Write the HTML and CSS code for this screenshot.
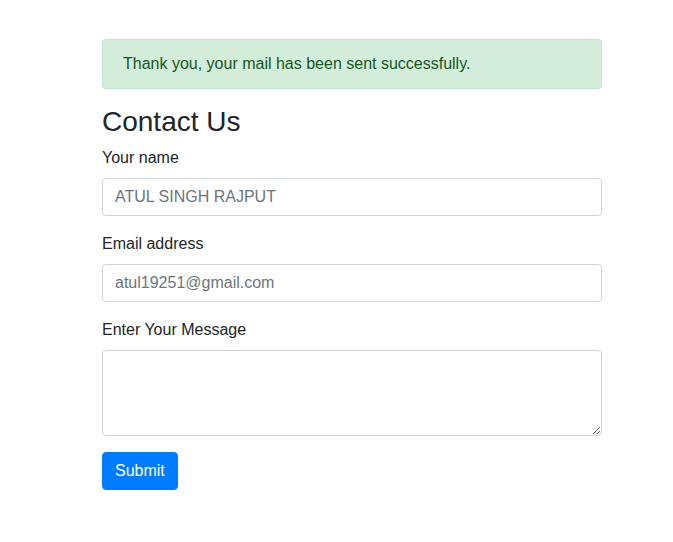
FILE: index.html
```html
<!DOCTYPE html>
<html lang="en">
<head>
<meta charset="utf-8">
<title>Contact Us</title>
<link rel="stylesheet" href="styles.css">
</head>
<body>
<div class="container">
  <div class="alert">Thank you, your mail has been sent successfully.</div>
  <h3 class="title">Contact Us</h3>
  <form class="form">
    <div class="group">
      <label class="label" for="name">Your name</label>
      <input class="control" id="name" type="text" placeholder="ATUL SINGH RAJPUT">
    </div>
    <div class="group">
      <label class="label" for="email">Email address</label>
      <input class="control" id="email" type="email" placeholder="atul19251@gmail.com">
    </div>
    <div class="group">
      <label class="label" for="msg">Enter Your Message</label>
      <textarea class="control area" id="msg" rows="3"></textarea>
    </div>
    <button class="btn" type="button">Submit</button>
  </form>
</div>
</body>
</html>
```
FILE: styles.css
```css
* { box-sizing: border-box; }
html, body { margin: 0; padding: 0; background: #fff; }
body {
  font-family: "Liberation Sans", Arial, sans-serif;
  font-size: 16px;
  line-height: 1.5;
  color: #212529;
}
.container {
  width: 500px;
  margin-left: 102px;
  padding-top: 39px;
}
.alert {
  padding: 12px 20px;
  margin-bottom: 16px;
  border: 1px solid #c3e6cb;
  border-radius: 4px;
  background: #d4edda;
  color: #155724;
}
.title {
  margin: 0 0 7px;
  font-size: 28px;
  font-weight: 500;
  line-height: 1.2;
}
.form { margin: 0; }
.group { margin-bottom: 16px; }
.label { display: inline-block; margin-bottom: 8px; }
.control {
  display: block;
  width: 100%;
  height: 38px;
  padding: 6px 12px;
  font-family: inherit;
  font-size: 16px;
  line-height: 1.5;
  color: #495057;
  background: #fff;
  border: 1px solid #ced4da;
  border-radius: 4px;
  margin: 0;
}
.control::placeholder { color: #6c757d; opacity: 1; }
.area { height: 86px; resize: vertical; }
.btn {
  display: inline-block;
  padding: 6px 12px;
  font-family: inherit;
  font-size: 16px;
  line-height: 1.5;
  color: #fff;
  background: #007bff;
  border: 1px solid #007bff;
  border-radius: 4px;
  margin: 0;
}
```
